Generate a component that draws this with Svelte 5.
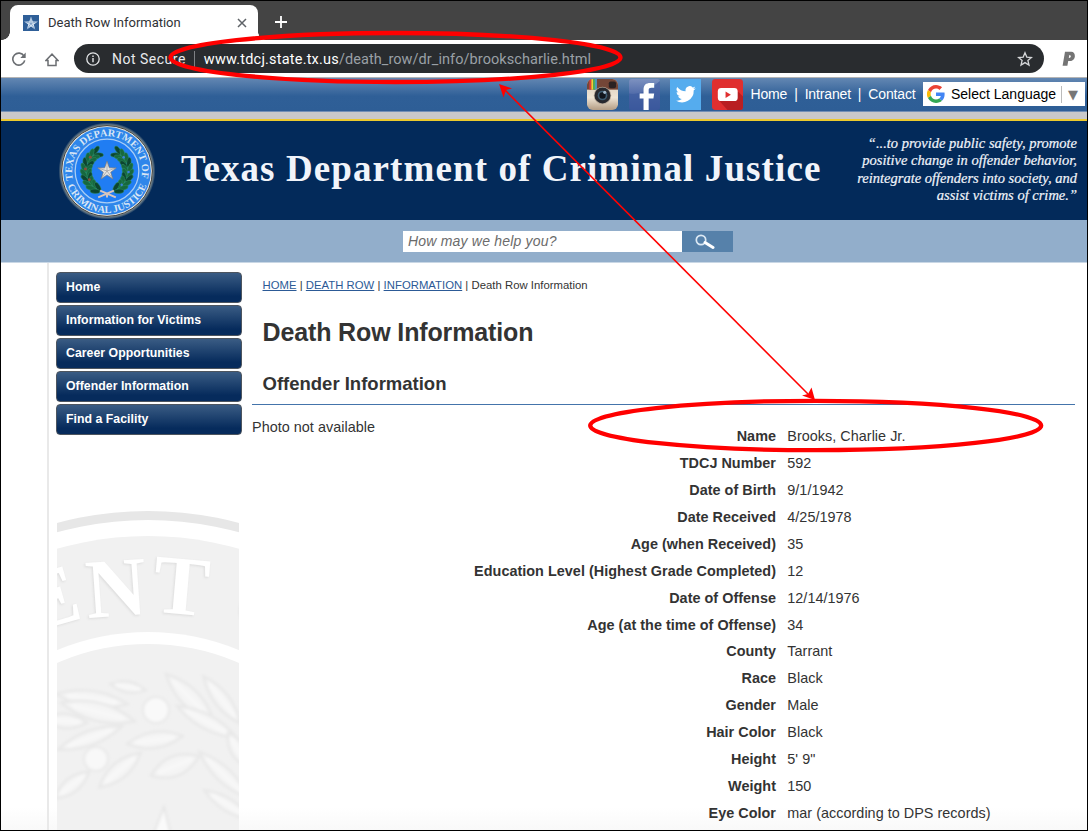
<script>
  const menu = ['Home', 'Information for Victims', 'Career Opportunities', 'Offender Information', 'Find a Facility'];
  const crumbs = ['HOME', 'DEATH ROW', 'INFORMATION'];
  const details = [
    ['Name', 'Brooks, Charlie Jr.'],
    ['TDCJ Number', '592'],
    ['Date of Birth', '9/1/1942'],
    ['Date Received', '4/25/1978'],
    ['Age (when Received)', '35'],
    ['Education Level (Highest Grade Completed)', '12'],
    ['Date of Offense', '12/14/1976'],
    ['Age (at the time of Offense)', '34'],
    ['County', 'Tarrant'],
    ['Race', 'Black'],
    ['Gender', 'Male'],
    ['Hair Color', 'Black'],
    ['Height', '5\' 9"'],
    ['Weight', '150'],
    ['Eye Color', 'mar (according to DPS records)']
  ];
  const leaves = [];
  for (let i = 0; i < 10; i++) {
    const deg = -62 + i * 13.5;
    const t = (deg * Math.PI) / 180;
    for (const side of [-1, 1]) {
      for (const r of [18.5, 24]) {
        leaves.push({
          x: side * Math.cos(t) * r,
          y: Math.sin(t) * r,
          a: side * (deg + 90) + (r > 20 ? 28 : -28) * side + (side < 0 ? 180 : 0),
          c: i % 3 ? '#17683f' : '#0c4530'
        });
      }
    }
  }
  const fronds = [
    [92, 699, 36, 9, 8], [98, 712, 38, 10, 14], [65, 721, 22, 8, 4], [90, 738, 34, 8, -20], [155, 740, 28, 9, -8],
    [120, 770, 27, 9, -40], [72, 785, 22, 8, -38], [175, 766, 26, 11, -22], [190, 698, 34, 10, 45], [207, 722, 34, 8, 28],
    [222, 700, 30, 8, 52], [224, 775, 34, 8, 43], [228, 805, 28, 7, 32], [128, 687, 18, 6, 10], [238, 750, 20, 8, 60]
  ];
  const star = '0,-10 2.4,-3.2 9.5,-3.1 3.8,1.2 5.9,8.1 0,4 -5.9,8.1 -3.8,1.2 -9.5,-3.1 -2.4,-3.2';
</script>

<div class="shot">
  <div class="tabs">
    <div class="tab">
      <svg class="fav" viewBox="0 0 16 16"><rect width="16" height="16" fill="#2f5f98" /><polygon points={star} transform="translate(8 8.7) scale(.72)" fill="#dce8f4" /><path d="M8 2v6.5L2 6.6M8 8.5l6-1.9M8 8.5L4.2 14M8 8.5l3.8 5.5" fill="none" stroke="#5983b5" stroke-width=".6" /></svg>
      <span>Death Row Information</span>
      <svg class="close" viewBox="0 0 10 10"><path d="M1 1l8 8M9 1L1 9" stroke="#5f6368" stroke-width="1.5" /></svg>
    </div>
    <svg class="plus" viewBox="0 0 12 12"><path d="M6 0v12M0 6h12" stroke="#fff" stroke-width="1.8" /></svg>
  </div>
  <div class="toolbar">
    <svg class="reload" viewBox="0 0 14 14"><path d="M12 4.1A6 6 0 1 0 12.7 8.3" fill="none" stroke="#6b6e72" stroke-width="1.6" /><path d="M13.7.4v5.500H8.3z" fill="#6b6e72" /></svg>
    <svg class="house" viewBox="0 0 14 14"><path d="M.9 7.6L7 1.2l6.1 6.4H11v5H3v-5z" fill="none" stroke="#6b6e72" stroke-width="1.5" /></svg>
    <div class="address">
      <svg class="info" viewBox="0 0 14 14"><circle cx="7" cy="7" r="6.2" fill="none" stroke="#e4e6e8" stroke-width="1.3" /><path d="M7 6v4.3M7 3.6v1.4" stroke="#e4e6e8" stroke-width="1.4" /></svg>
      <span class="secure">Not Secure</span>
      <i></i>
      <span class="host">www.tdcj.state.tx.us</span><span class="path">/death_row/dr_info/brookscharlie.html</span>
      <svg class="bookmark" viewBox="0 0 16 16"><path d="M8 1.8l1.8 4.3 4.6.4-3.5 3 1.1 4.6-4-2.5-4 2.5 1.1-4.6-3.500-3 4.6-.4z" fill="none" stroke="#d5d7d9" stroke-width="1.3" /></svg>
    </div>
    <svg class="pay" viewBox="0 0 14 16"><path fill-rule="evenodd" d="M3 .8h6.3c5 0 5 9.2-1.6 9.2H6.2L5.4 14.8H.6zM7.3 4l-.5 3c2.2.2 3-2.8.5-3z" fill="#747474" /></svg>
  </div>

  <div class="blue">
    <svg class="soc" viewBox="0 0 32 32">
      <defs><clipPath id="ig"><rect width="32" height="32" rx="6" /></clipPath><linearGradient id="cream" x2="0" y2="1"><stop stop-color="#d8cab8" /><stop offset=".6" stop-color="#eee4d4" /><stop offset="1" stop-color="#b49d84" /></linearGradient></defs>
      <g clip-path="url(#ig)"><rect width="32" height="32" fill="url(#cream)" /><rect width="32" height="11" fill="#744637" /><rect x="2.5" width="2" height="11" fill="#e33b3b" /><rect x="4.5" width="2" height="11" fill="#f3cf35" /><rect x="6.5" width="2" height="11" fill="#47b55c" /><rect x="8.5" width="1.6" height="11" fill="#47a8de" /><rect x="22.5" y="2.5" width="7.5" height="7" rx="2" fill="#2b2223" /></g>
      <circle cx="16" cy="17" r="9" fill="#b8aa99" /><circle cx="16" cy="17" r="8.2" fill="#27282e" /><circle cx="16" cy="17" r="5" fill="#3d5a70" /><circle cx="16" cy="17" r="3.3" fill="#11151d" /><circle cx="18.3" cy="13.8" r="1.6" fill="#9eb4c7" />
    </svg>
    <svg class="soc" viewBox="0 0 32 32"><defs><linearGradient id="fb" x2="0" y2="1"><stop stop-color="#7d91c0" /><stop offset=".5" stop-color="#506ba9" /><stop offset="1" stop-color="#3d599c" /></linearGradient></defs><rect width="32" height="32" rx="3" fill="url(#fb)" /><path d="M0 15Q13 18 32 2V29a3 3 0 0 1-3 3H3a3 3 0 0 1-3-3z" fill="#39579c" opacity=".55" /><path d="M15 32V20h-4v-5h4v-4c0-5 2.6-7 7-7h4v5h-3c-2 0-2.7.7-2.7 2.4V15H26l-.8 5h-4.9v12z" fill="#fff" /></svg>
    <svg class="soc" viewBox="0 0 32 32"><rect width="32" height="32" fill="#55acee" /><path transform="translate(6 5.5) scale(.86)" d="M23.9 4.6a10 10 0 0 1-2.8.8 4.9 4.9 0 0 0 2.2-2.7c-1 .6-2 1-3.1 1.2a4.9 4.9 0 0 0-8.4 4.5A14 14 0 0 1 1.7 3.1a4.9 4.9 0 0 0 1.5 6.6 4.9 4.9 0 0 1-2.2-.6 4.9 4.9 0 0 0 3.9 4.9 5 5 0 0 1-2.2.1 4.9 4.9 0 0 0 4.6 3.4A9.9 9.9 0 0 1 0 19.5a14 14 0 0 0 21.5-12.4 10 10 0 0 0 2.4-2.5z" fill="#fff" /></svg>
    <svg class="soc" viewBox="0 0 32 32"><rect width="32" height="32" rx="3.5" fill="#e02f2f" /><path d="M25 11l7 7v11a3 3 0 0 1-3 3H16L7 22z" fill="#b91f22" /><rect x="6" y="9.3" width="20.5" height="13.5" rx="3.5" fill="#fff" /><path d="M14 13v6.5l5.5-3.2z" fill="#e02f2f" /></svg>
    <nav><span>Home</span><b>|</b><span>Intranet</span><b>|</b><span>Contact</span></nav>
    <div class="lang">
      <svg viewBox="0 0 48 48"><path fill="#ea4335" d="M24 9.5c3.5 0 6.700 1.200 9.200 3.600l6.900-6.900C35.900 2.400 30.500 0 24 0 14.600 0 6.500 5.400 2.600 13.200l8 6.200C12.400 13.700 17.700 9.500 24 9.500z" /><path fill="#4285f4" d="M47 24.500c0-1.600-.2-3.100-.4-4.500H24v9h12.900c-.6 3-2.300 5.500-4.800 7.200l7.700 6C44.400 38 47 32 47 24.500z" /><path fill="#fbbc05" d="M10.500 28.600a14.500 14.500 0 0 1 0-9.200l-8-6.200a24 24 0 0 0 0 21.600z" /><path fill="#34a853" d="M24 48c6.500 0 11.900-2.100 15.900-5.800l-7.700-6c-2.200 1.500-4.900 2.300-8.200 2.300-6.300 0-11.600-4.200-13.500-9.900l-8 6.200C6.500 42.600 14.600 48 24 48z" /></svg>
      <span>Select Language</span><em>▼</em>
    </div>
  </div>
  <div class="grey"></div>

  <header>
    <svg class="seal" viewBox="-50 -50 100 100">
      <defs><path id="top" d="M-34.600 9A35.700 35.700 0 1 1 34.600 9" /><path id="bottom" d="M-40.600 14A43 43 0 0 0 40.600 14" /><radialGradient id="halo"><stop offset=".9" stop-color="#d8d4b8" /><stop offset="1" stop-color="#d8d4b8" stop-opacity="0" /></radialGradient></defs>
      <circle r="49.500" fill="url(#halo)" /><circle r="46.300" fill="#e9e9e4" stroke="#3b3a38" stroke-width="1" /><circle r="44.800" fill="#2f86ea" /><circle r="32.500" fill="#207df3" stroke="#a9cdf5" stroke-width="1.300" />
      <text class="ring"><textPath href="#top" textLength="128" lengthAdjust="spacingAndGlyphs">TEXAS DEPARTMENT OF</textPath></text>
      <text class="ring"><textPath href="#bottom" startOffset="1" textLength="104" lengthAdjust="spacingAndGlyphs">CRIMINAL JUSTICE</textPath></text>
      {#each leaves as l}<ellipse rx="5" ry="2.200" transform="translate({l.x} {l.y}) rotate({l.a})" fill={l.c} stroke="#2f9060" stroke-width=".5" />{/each}
      <g fill="#8a4e38"><circle cx="-17" cy="-14" r="1.500" /><circle cx="-22" cy="-2" r="1.500" /><circle cx="-18" cy="9" r="1.500" /></g>
      <g fill="#3b7fdc"><circle cx="17" cy="-14" r="1.300" /><circle cx="22" cy="1" r="1.300" /><circle cx="15" cy="14" r="1.300" /></g>
      <path d="M-9 27L7 20M9 27L-7 20M0 23v4" stroke="#d8c5bd" stroke-width="2" />
      <polygon points={star} fill="#e4e4e2" stroke="#777" stroke-width=".7" />
      <path d="M0-9V0L9-3M0 0l5.500 7.500M0 0l-5.500 7.500M0 0L-9-3" stroke="#999" stroke-width=".7" fill="none" />
    </svg>
    <div class="title">Texas Department of Criminal Justice</div>
    <div class="motto"><div>“...to provide public safety, promote</div><div>positive change in offender behavior,</div><div>reintegrate offenders into society, and</div><div>assist victims of crime.”</div></div>
  </header>
  <div class="search">
    <div class="field">How may we help you?</div>
    <div class="go"><svg viewBox="0 0 20 16"><circle cx="6" cy="6" r="4.700" fill="none" stroke="#dce9f4" stroke-width="1.700" /><path d="M10 8.500l8 5" stroke="#fff" stroke-width="3" stroke-linecap="round" /></svg></div>
  </div>

  <main>
    <aside>
      <div class="menu">{#each menu as item}<a href="#{item}">{item}</a>{/each}</div>
      <svg class="mark" viewBox="57 505 182 325">
        <defs><filter id="soft"><feGaussianBlur stdDeviation="1.600" /></filter><filter id="softer"><feGaussianBlur stdDeviation=".7" /></filter></defs>
        <g filter="url(#softer)"><circle cx="148" cy="865" r="354" fill="#e7e7e7" /><circle cx="148" cy="865" r="345" fill="#fff" /><circle cx="148" cy="868" r="332" fill="#f1f1f1" /></g>
        <circle cx="148" cy="869" r="237" fill="#fff" filter="url(#softer)" /><circle cx="148" cy="871" r="227" fill="#f1f1f1" filter="url(#softer)" />
        <g class="big"><text transform="translate(58 625) rotate(-16)">E</text><text transform="translate(118 616) rotate(-4)">N</text><text transform="translate(179 614) rotate(5)">T</text><text transform="translate(262 634) rotate(16)">O</text></g>
        <g filter="url(#soft)">
          {#each fronds as [x, y, a, b, r]}<g transform="translate({x} {y}) rotate({r})"><path d="M{-a} 0Q0 {-b * 1.8} {a} 0Q0 {b * 1.8} {-a} 0z" fill="#f4f4f4" stroke="#e8e8e8" stroke-width="2.500" /><path d="M{-a * .7} 0H{a * .7}" stroke="#f8f8f8" stroke-width="4" /></g>{/each}
          <circle cx="156" cy="710" r="13" fill="#f9f9f9" stroke="#e8e8e8" stroke-width="2" /><circle cx="96" cy="759" r="12" fill="#f8f8f8" stroke="#e8e8e8" stroke-width="2" />
          <path d="M153 835l11-28 7 28" fill="#fafafa" stroke="#e5e5e5" stroke-width="2" />
        </g>
      </svg>
    </aside>
    <section>
      <div class="crumbs">{#each crumbs as c}<a href="#{c}">{c}</a>{' | '}{/each}Death Row Information</div>
      <h1>Death Row Information</h1>
      <h2>Offender Information</h2>
      <div class="record">
        <div class="photo">Photo not available</div>
        <dl>{#each details as [k, v]}<dt>{k}</dt><dd>{v}</dd>{/each}</dl>
      </div>
    </section>
  </main>

  <svg class="notes" viewBox="0 0 1088 831" fill="none" stroke="#f00">
    <ellipse cx="395.500" cy="57.500" rx="225" ry="24.500" stroke-width="4.300" />
    <ellipse cx="815.700" cy="425.500" rx="225.500" ry="24.700" stroke-width="4.300" />
    <path d="M505 90L808 394" stroke-width="1.600" />
    <path d="M499 84l13 4.500-6 1.500-2.500 7.500zM815 400l-13-4.500 6-1.500 3.500-6.500z" fill="#f00" stroke="none" />
  </svg>
</div>

<style>
  :global(body) { background: #fff; overflow: hidden; }
  .shot { position: relative; box-sizing: border-box; width: 1088px; height: 831px; border: 1px solid #000; background: #fff; overflow: hidden; font-family: "Liberation Sans", Arial, sans-serif; color: #333; white-space: nowrap; }
  svg { flex: none; display: block; }
  .tabs { height: 39px; background: #444; display: flex; align-items: flex-end; }
  .tab { position: relative; box-sizing: border-box; width: 248px; height: 35px; margin-left: 9px; background: #fff; border-radius: 8px 8px 0 0; display: flex; align-items: center; padding: 0 11px 0 13px; font: 13px Roboto, sans-serif; color: #303236; }
  .tab::before, .tab::after { content: ""; position: absolute; bottom: 0; width: 8px; height: 8px; }
  .tab::before { left: -8px; background: radial-gradient(circle at 0 0, #444 7.5px, #fff 8px); }
  .tab::after { right: -8px; background: radial-gradient(circle at 100% 0, #444 7.5px, #fff 8px); }
  .fav { width: 16px; height: 16px; margin-right: 9px; }
  .tab span { letter-spacing: -.02px; }
  .close { width: 10px; height: 10px; margin-left: auto; }
  .plus { width: 12px; height: 12px; margin: 0 0 12px 17px; }
  .toolbar { height: 38px; border-bottom: 1px solid #b4b4b4; box-sizing: border-box; display: flex; align-items: center; padding-left: 11px; }
  .reload { width: 14px; height: 14px; }
  .house { width: 14px; height: 14px; margin: 2px 14px 0 19px; }
  .address { box-sizing: border-box; width: 970px; height: 29px; margin-left: 1px; border-radius: 15px; background: #292c2f; display: flex; align-items: center; padding: 1px 11px 0 12px; font: 14px Roboto, sans-serif; color: #e8eaed; }
  .info { width: 14px; height: 14px; margin-right: 12px; }
  .secure { letter-spacing: .5px; font-size: 14px; }
  .address i { width: 1px; height: 16px; background: #7e8184; margin: 0 9px 0 8px; }
  .host { color: #fff; letter-spacing: .2px; font-size: 14.5px; }
  .path { color: #9aa0a6; font-size: 14.5px; letter-spacing: .07px; }
  .bookmark { width: 16px; height: 16px; margin-left: auto; }
  .pay { width: 14px; height: 16px; margin-left: 18px; }
  .blue { height: 34px; box-sizing: border-box; border-bottom: 1px solid #7290b5; background: linear-gradient(#6387b2, #2f5f97 55%, #2e5e96); display: flex; align-items: center; padding-left: 586px; }
  .soc { width: 31px; height: 31px; margin-right: 10.5px; }
  nav { display: flex; color: #fff; font-size: 14px; margin: -1px 0 0 -2.500px; width: 165px; justify-content: space-between; letter-spacing: -.15px; }
  nav b { font-weight: 400; }
  .lang { box-sizing: border-box; width: 162px; height: 24px; background: #fff; margin: -1px 2px 0 auto; display: flex; align-items: center; color: #000; font-size: 14px; padding-left: 4px; overflow: hidden; }
  .lang svg { width: 18px; height: 18px; margin-right: 6px; }
  .lang em { color: #777; font: 13px "DejaVu Sans", sans-serif; border-left: 1px solid #bbb; margin-left: 5px; padding-left: 6px; line-height: 17px; }
  .grey { height: 9px; box-sizing: border-box; border-bottom: 2px solid #ecc92e; background: #c9c9c9; }
  header { height: 99px; background: #032a5a; display: flex; align-items: center; color: #f1f4fa; font-family: "Liberation Serif", serif; }
  .seal { width: 98px; height: 98px; margin-left: 57px; overflow: visible; }
  .ring { font: bold 10.5px "Liberation Serif", serif; fill: #d7e5f5; }
  .title { margin-left: 25px; margin-top: -5px; font-size: 37px; font-weight: 700; letter-spacing: 1.1px; width: 642px; }
  .motto { margin-left: auto; margin-right: 10px; margin-top: -2px; text-align: right; font-size: 14.5px; font-style: italic; line-height: 17.300px; -webkit-text-stroke: .2px #f1f4fa; }
  .search { height: 43px; background: #92aecb; border-bottom: 1px solid #c9d7e5; box-sizing: border-box; display: flex; align-items: center; padding: 0 0 0 402px; }
  .field { box-sizing: border-box; width: 279px; height: 21px; background: #fff; color: #6b6b6b; font-size: 14px; font-style: italic; line-height: 21px; padding-left: 5px; letter-spacing: .2px; }
  .go { width: 51px; height: 21px; background: #5681aa; }
  .go svg { width: 20px; height: 16px; margin: 3px 0 0 13px; }
  main { display: flex; height: 567px; background: linear-gradient(#fff 96%, #f9f9f9); }
  aside { box-sizing: border-box; margin-left: 46px; border-left: 2px solid #e9e9e9; padding: 9px 0 0 7px; width: 205px; }
  .menu { display: flex; flex-direction: column; gap: 2px; }
  .menu a { box-sizing: border-box; width: 186px; height: 31.100px; border: 1px solid #4d555f; border-radius: 4px; background: linear-gradient(#3a5c84, #062b5c 80%); color: #fff; font-size: 12.3px; font-weight: 700; text-decoration: none; line-height: 28px; padding-left: 9px; letter-spacing: .03px; }
  .mark { width: 182px; height: 325px; margin: 70px 0 0 1px; }
  .big { font: bold 84px "Liberation Serif", serif; fill: #fff; text-anchor: middle; filter: drop-shadow(-1px 1px 1px #dcdcdc); }
  section { width: 823px; }
  .crumbs { font-size: 11.3px; line-height: 14px; margin: 15px 0 0 10.500px; letter-spacing: .03px; }
  .crumbs a { color: #2c5a96; }
  h1 { margin: 24px 0 0 10.500px; font-size: 25px; line-height: 32px; letter-spacing: -.13px; }
  h2 { margin: 22px 0 0; padding: 0 0 6px 10.500px; font-size: 18.500px; line-height: 28px; border-bottom: 1px solid #4474ab; }
  .record { display: flex; }
  .photo { width: 200px; padding-top: 13px; font-size: 14.400px; line-height: 18px; letter-spacing: .03px; }
  dl { margin: 18px 0 0; width: 623px; display: grid; grid-template-columns: 324px 1fr; column-gap: 11.300px; grid-auto-rows: 26.880px; align-items: center; font-size: 14.400px; }
  dt { text-align: right; font-weight: 700; letter-spacing: .03px; }
  dd { margin: 0; letter-spacing: .03px; }
  .notes { position: absolute; left: -1px; top: -1px; width: 1088px; height: 831px; }
</style>
